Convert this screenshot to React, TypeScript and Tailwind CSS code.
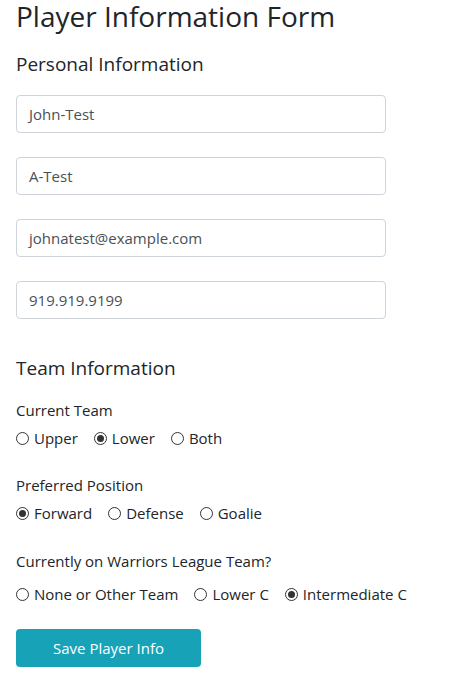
import React from "react";

const font = { fontFamily: '"Open Sans", "Noto Sans", sans-serif' };

function Field({ value }: { value: string }) {
  return (
    <div className="h-[38px] w-[370px] rounded-[4px] border border-[#ced4da] bg-white px-3 flex items-center text-[15px] text-[#495057]">
      {value}
    </div>
  );
}

function Radio({ label, checked }: { label: string; checked?: boolean }) {
  return (
    <label className="flex items-center gap-[5px]">
      <span className="w-[13px] h-[13px] rounded-full border border-[#333] flex items-center justify-center">
        {checked && <span className="w-[7px] h-[7px] rounded-full bg-[#333]" />}
      </span>
      <span>{label}</span>
    </label>
  );
}

function Group({
  title,
  options,
  checked,
}: {
  title: string;
  options: string[];
  checked: number;
}) {
  return (
    <div className="text-[15px] text-[#212529]">
      <div className="h-[22px] leading-[22px]">{title}</div>
      <div className="mt-[6px] h-[22px] flex items-center gap-4">
        {options.map((o, i) => (
          <Radio key={o} label={o} checked={i === checked} />
        ))}
      </div>
    </div>
  );
}

export default function App() {
  return (
    <div className="min-h-screen bg-white px-4 pt-[1px] text-[#212529]" style={font}>
      <h1 className="text-[28px] leading-[30px] h-[31px]">
        Player Information Form
      </h1>
      <h2 className="mt-[20px] text-[19px] leading-[24px]">
        Personal Information
      </h2>
      <div className="mt-[19px] flex flex-col gap-6">
        <Field value="John-Test" />
        <Field value="A-Test" />
        <Field value="johnatest@example.com" />
        <Field value="919.919.9199" />
      </div>
      <h2 className="mt-[37px] text-[19px] leading-[24px]">Team Information</h2>
      <div className="mt-[19px]">
        <Group title="Current Team" options={["Upper", "Lower", "Both"]} checked={1} />
      </div>
      <div className="mt-[25px]">
        <Group
          title="Preferred Position"
          options={["Forward", "Defense", "Goalie"]}
          checked={0}
        />
      </div>
      <div className="mt-[26px] text-[15px]">
        <div className="h-[22px] leading-[22px]">Currently on Warriors League Team?</div>
        <div className="mt-[11px] h-[22px] flex items-center gap-4">
          <Radio label="None or Other Team" />
          <Radio label="Lower C" />
          <Radio label="Intermediate C" checked />
        </div>
      </div>
      <button className="mt-[24px] h-[38px] w-[185px] rounded-[4px] bg-[#17a2b8] text-white text-[15px]">
        Save Player Info
      </button>
    </div>
  );
}
